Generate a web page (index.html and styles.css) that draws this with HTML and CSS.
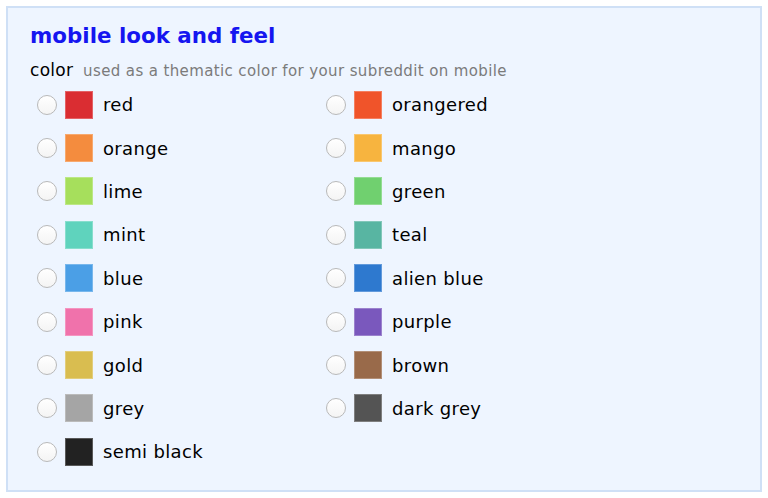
FILE: index.html
```html
<!DOCTYPE html>
<html lang="en">
<head>
    <meta charset="UTF-8">
    <title>mobile look and feel</title>
    <link rel="stylesheet" href="styles.css">
</head>
<body>
    <div class="panel">
        <h2>mobile look and feel</h2>
        <div class="label">color <span class="hint">used as a thematic color for your subreddit on mobile</span></div>
        <div class="colors">
            <label class="opt"><span class="radio"></span><span class="sw c-red"></span>red</label>
            <label class="opt"><span class="radio"></span><span class="sw c-orangered"></span>orangered</label>
            <label class="opt"><span class="radio"></span><span class="sw c-orange"></span>orange</label>
            <label class="opt"><span class="radio"></span><span class="sw c-mango"></span>mango</label>
            <label class="opt"><span class="radio"></span><span class="sw c-lime"></span>lime</label>
            <label class="opt"><span class="radio"></span><span class="sw c-green"></span>green</label>
            <label class="opt"><span class="radio"></span><span class="sw c-mint"></span>mint</label>
            <label class="opt"><span class="radio"></span><span class="sw c-teal"></span>teal</label>
            <label class="opt"><span class="radio"></span><span class="sw c-blue"></span>blue</label>
            <label class="opt"><span class="radio"></span><span class="sw c-alien"></span>alien blue</label>
            <label class="opt"><span class="radio"></span><span class="sw c-pink"></span>pink</label>
            <label class="opt"><span class="radio"></span><span class="sw c-purple"></span>purple</label>
            <label class="opt"><span class="radio"></span><span class="sw c-gold"></span>gold</label>
            <label class="opt"><span class="radio"></span><span class="sw c-brown"></span>brown</label>
            <label class="opt"><span class="radio"></span><span class="sw c-grey"></span>grey</label>
            <label class="opt"><span class="radio"></span><span class="sw c-darkgrey"></span>dark grey</label>
            <label class="opt"><span class="radio"></span><span class="sw c-semiblack"></span>semi black</label>
        </div>
    </div>
</body>
</html>
```

FILE: styles.css
```css
*{
    margin: 0;
    padding: 0;
    box-sizing: border-box;
}
body{
    background: #fff;
    font-family: "DejaVu Sans", Verdana, sans-serif;
    color: #000;
}
.panel{
    margin: 6px;
    height: 486px;
    border: 2px solid #cfe0f6;
    background-color: #eef5ff;
    padding: 14px 22px 0 22px;
}
h2{
    font-size: 21.4px;
    font-weight: bold;
    color: #1515f0;
    line-height: 28px;
}
.label{
    font-size: 17px;
    line-height: 24px;
    margin-top: 8px;
    letter-spacing: 0.3px;
}
.hint{
    font-size: 15px;
    color: #7b7b7b;
    margin-left: 4px;
    letter-spacing: 0.38px;
}
.colors{
    display: grid;
    grid-template-columns: 289px 289px;
    grid-auto-rows: 43.4px;
    padding-left: 7px;
    margin-top: 0;
}
.opt{
    display: flex;
    align-items: center;
    font-size: 18px;
    letter-spacing: 0.35px;
}
.radio{
    width: 20px;
    height: 20px;
    border-radius: 50%;
    border: 1px solid #b9b9b9;
    background: linear-gradient(#ffffff, #f4f4f4);
    margin-right: 8px;
}
.sw{
    width: 28px;
    height: 28px;
    margin-right: 10px;
    box-shadow: inset 0 0 0 1px rgba(255,255,255,0.25);
}
.c-red{ background: #da2d32; }
.c-orangered{ background: #f0542a; }
.c-orange{ background: #f48c3e; }
.c-mango{ background: #f7b43f; }
.c-lime{ background: #a6df5c; }
.c-green{ background: #70d06f; }
.c-mint{ background: #5fd3bd; }
.c-teal{ background: #58b5a2; }
.c-blue{ background: #4b9fe6; }
.c-alien{ background: #2e79cf; }
.c-pink{ background: #f072ab; }
.c-purple{ background: #7a58bd; }
.c-gold{ background: #d9bd50; }
.c-brown{ background: #996a4a; }
.c-grey{ background: #a5a5a5; }
.c-darkgrey{ background: #545454; }
.c-semiblack{ background: #222222; }
```
